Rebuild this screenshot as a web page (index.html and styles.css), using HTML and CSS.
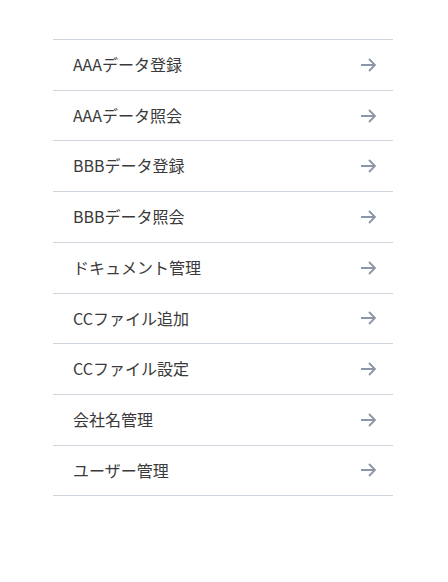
FILE: index.html
```html
<!DOCTYPE html>
<html lang="ja">
<head>
    <meta charset="UTF-8">
    <meta name="viewport" content="width=device-width, initial-scale=1.0">
    <title>メニュー</title>
    <link rel="stylesheet" href="styles.css">
</head>
<body>
    <div class="container">
        <ul class="menu">
            <li><a href="#"><span>AAAデータ登録</span><svg class="arrow" viewBox="0 0 16 14"><path d="M1 7h14M9 1l6 6-6 6"/></svg></a></li>
            <li><a href="#"><span>AAAデータ照会</span><svg class="arrow" viewBox="0 0 16 14"><path d="M1 7h14M9 1l6 6-6 6"/></svg></a></li>
            <li><a href="#"><span>BBBデータ登録</span><svg class="arrow" viewBox="0 0 16 14"><path d="M1 7h14M9 1l6 6-6 6"/></svg></a></li>
            <li><a href="#"><span>BBBデータ照会</span><svg class="arrow" viewBox="0 0 16 14"><path d="M1 7h14M9 1l6 6-6 6"/></svg></a></li>
            <li><a href="#"><span>ドキュメント管理</span><svg class="arrow" viewBox="0 0 16 14"><path d="M1 7h14M9 1l6 6-6 6"/></svg></a></li>
            <li><a href="#"><span>CCファイル追加</span><svg class="arrow" viewBox="0 0 16 14"><path d="M1 7h14M9 1l6 6-6 6"/></svg></a></li>
            <li><a href="#"><span>CCファイル設定</span><svg class="arrow" viewBox="0 0 16 14"><path d="M1 7h14M9 1l6 6-6 6"/></svg></a></li>
            <li><a href="#"><span>会社名管理</span><svg class="arrow" viewBox="0 0 16 14"><path d="M1 7h14M9 1l6 6-6 6"/></svg></a></li>
            <li><a href="#"><span>ユーザー管理</span><svg class="arrow" viewBox="0 0 16 14"><path d="M1 7h14M9 1l6 6-6 6"/></svg></a></li>
        </ul>
    </div>
</body>
</html>
```

FILE: styles.css
```css
* {
    box-sizing: border-box;
}

body {
    font-family: "Noto Sans CJK JP", "Noto Sans", sans-serif;
    background-color: #fff;
    color: #3a3a3a;
    margin: 0;
    padding: 0;
}

.container {
    width: 340px;
    margin: 39px 0 0 53px;
}

.menu {
    list-style: none;
    margin: 0;
    padding: 0;
    border-top: 1px solid #cfd5dc;
}

.menu li {
    border-bottom: 1px solid #cfd5dc;
}

.menu a {
    display: flex;
    align-items: center;
    justify-content: space-between;
    padding: 12px 17px 12px 20px;
    font-size: 16px;
    line-height: 25.7px;
    color: #3a3a3a;
    text-decoration: none;
}

.arrow {
    width: 16px;
    height: 14px;
    fill: none;
    stroke: #8c96a6;
    stroke-width: 1.9;
}
```
